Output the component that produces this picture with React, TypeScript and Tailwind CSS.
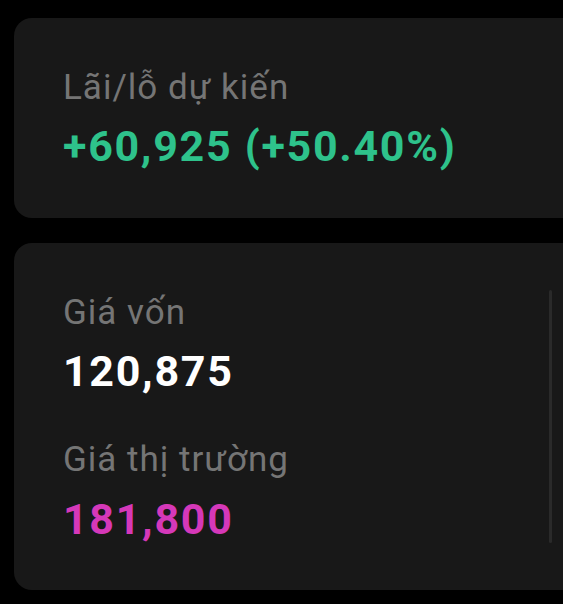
import React from 'react'

const font = { fontFamily: 'Roboto, "Noto Sans", sans-serif' }

function Stat({ label, value, color, gap = 'mt-[14px]' }: { label: string; value: string; color: string; gap?: string }) {
  return (
    <div>
      <div className="text-[35px] leading-[40px] tracking-[1px] text-[#757575]">{label}</div>
      <div className={`${gap} text-[43px] leading-[48px] font-bold tracking-[1.7px] ${color}`}>{value}</div>
    </div>
  )
}

export default function App() {
  return (
    <div className="h-[604px] w-[563px] overflow-hidden bg-black pl-[14px] pt-[18px]" style={font}>
      {/* Expected P/L */}
      <div className="h-[200px] rounded-l-[18px] bg-[#181818] pl-[49px] pt-[50px]">
        <Stat label="Lãi/lỗ dự kiến" value="+60,925 (+50.40%)" color="text-[#2ec28b]" />
      </div>

      {/* Cost / market value */}
      <div className="mt-[25px] flex h-[347px] rounded-l-[18px] bg-[#181818] pl-[49px] pr-[11px]">
        <div className="flex flex-1 flex-col gap-[45px] pt-[50px]">
          <Stat label="Giá vốn" value="120,875" color="text-white" />
          <Stat label="Giá thị trường" value="181,800" color="text-[#d538b9]" gap="mt-[15px]" />
        </div>
        <div className="h-[253px] w-[3px] self-center rounded-full bg-[#2a2a2a]" />
      </div>
    </div>
  )
}
